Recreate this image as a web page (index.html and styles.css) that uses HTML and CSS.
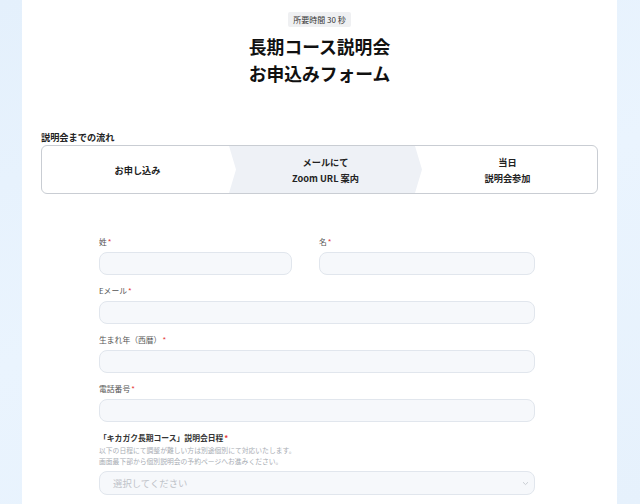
FILE: index.html
```html
<!DOCTYPE html>
<html lang="ja">
<head>
<meta charset="utf-8">
<link rel="stylesheet" href="styles.css">
</head>
<body>
<div class="panel">
  <div class="head">
    <span class="badge">所要時間 30 秒</span>
    <h1 class="title">長期コース説明会<br>お申込みフォーム</h1>
  </div>
  <section class="flow">
    <h2 class="flow-title">説明会までの流れ</h2>
    <div class="flow-box">
      <div class="step step-1">お申し込み</div>
      <div class="step step-2">メールにて<br>Zoom URL 案内</div>
      <div class="step step-3">当日<br>説明会参加</div>
    </div>
  </section>
  <form class="form">
    <div class="row-2">
      <div class="field">
        <label class="label">姓<span class="req">*</span></label>
        <div class="input"></div>
      </div>
      <div class="field">
        <label class="label">名<span class="req">*</span></label>
        <div class="input"></div>
      </div>
    </div>
    <div class="field">
      <label class="label">Eメール<span class="req">*</span></label>
      <div class="input"></div>
    </div>
    <div class="field">
      <label class="label">生まれ年（西暦）<span class="req">*</span></label>
      <div class="input"></div>
    </div>
    <div class="field">
      <label class="label">電話番号<span class="req">*</span></label>
      <div class="input"></div>
    </div>
    <div class="field">
      <label class="label label-strong">「キカガク長期コース」説明会日程<span class="req">*</span></label>
      <p class="note">以下の日程にて調整が難しい方は別途個別にて対応いたします。<br>画面最下部から個別説明会の予約ページへお進みください。</p>
      <div class="input select">
        <span class="placeholder">選択してください</span>
        <svg class="chev" width="7" height="5" viewBox="0 0 7 5"><path d="M1 1.2 L3.5 3.6 L6 1.2" fill="none" stroke="#c4c8ce" stroke-width="0.9"/></svg>
      </div>
    </div>
  </form>
</div>
</body>
</html>
```

FILE: styles.css
```css
* { box-sizing: border-box; }
html, body { margin: 0; padding: 0; }
body {
  width: 640px;
  height: 504px;
  overflow: hidden;
  background: linear-gradient(160deg, #e4f0fc 0%, #eaf4fe 50%, #e6f1fc 100%);
  font-family: "Noto Sans CJK JP", "Noto Sans", sans-serif;
  color: #222;
}
.panel {
  margin-left: 22px;
  width: 595px;
  min-height: 504px;
  background: #fff;
  padding-top: 12px;
}
.head {
  display: flex;
  flex-direction: column;
  align-items: center;
}
.badge {
  display: block;
  height: 15px;
  line-height: 15px;
  padding: 0 5px;
  font-size: 8px;
  color: #333;
  background: #eff0f2;
  border-radius: 2px;
}
.title {
  margin: 6px 0 0;
  font-size: 17.8px;
  line-height: 27px;
  font-weight: 700;
  text-align: center;
  color: #111;
}
.flow {
  padding: 0 19px;
  margin-top: 43px;
}
.flow-title {
  margin: 0;
  font-size: 9.2px;
  line-height: 14px;
  font-weight: 700;
  color: #222;
}
.flow-box {
  margin-top: 1px;
  height: 49px;
  border: 1px solid #c9cdd3;
  border-radius: 6px;
  display: flex;
  overflow: hidden;
}
.step {
  display: flex;
  align-items: center;
  justify-content: center;
  text-align: center;
  font-size: 9.2px;
  line-height: 16px;
  font-weight: 700;
  color: #222;
}
.step-1 { width: 187px; padding-left: 4px; }
.step-2 {
  width: 193px;
  background: #eef1f6;
  clip-path: polygon(0 0, calc(100% - 7px) 0, 100% 50%, calc(100% - 7px) 100%, 0 100%, 7px 50%);
}
.step-3 { flex: 1; margin-left: -4px; }
.form {
  margin: 42px 0 0 77px;
  width: 436px;
  display: flex;
  flex-direction: column;
  gap: 10px;
}
.row-2 {
  display: grid;
  grid-template-columns: 193px 216px;
  column-gap: 27px;
}
.field {
  display: flex;
  flex-direction: column;
}
.label {
  font-size: 7.8px;
  line-height: 12px;
  color: #555;
  margin-bottom: 4px;
}
.label-strong {
  color: #333;
  font-weight: 700;
  margin-bottom: 1px;
}
.req { color: #e53935; margin-left: 1px; }
.input {
  height: 23px;
  background: #f6f8fb;
  border: 1px solid #e1e6ed;
  border-radius: 8px;
}
.note {
  margin: 0 0 4px;
  font-size: 6.8px;
  line-height: 11px;
  color: #a8adb4;
}
.select {
  height: 24px;
  display: flex;
  align-items: center;
  justify-content: space-between;
  padding: 0 5px 0 13px;
}
.placeholder {
  font-size: 9.4px;
  color: #bfc3c9;
}
.chev { display: block; }
```
